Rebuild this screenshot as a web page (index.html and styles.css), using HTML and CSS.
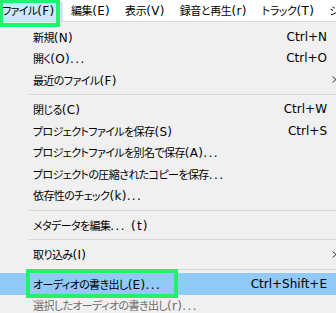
FILE: index.html
```html
<!DOCTYPE html>
<html lang="ja">
<head>
<meta charset="utf-8">
<link rel="stylesheet" href="styles.css">
</head>
<body>
<div class="menubar">
  <span class="mi first active">ファイル<span class="lat">(F)</span></span>
  <span class="mi">編集<span class="lat">(E)</span></span>
  <span class="mi">表示<span class="lat">(V)</span></span>
  <span class="mi">録音と再生<span class="lat">(r)</span></span>
  <span class="mi">トラック<span class="lat">(T)</span></span>
  <span class="mi">ジ</span>
</div>
<div class="menu">
  <div class="row"><span class="label">新規<span class="lat">(N)</span></span><span class="key">Ctrl+N</span><span class="sub"></span></div>
  <div class="row"><span class="label">開く<span class="lat">(O)</span><span class="dots">...</span></span><span class="key">Ctrl+O</span><span class="sub"></span></div>
  <div class="row"><span class="label">最近のファイル<span class="lat">(F)</span></span><span class="key"></span><span class="sub"><svg width="5" height="7" viewBox="0 0 5 7"><path d="M0.5 0.5 L4 3.5 L0.5 6.5" fill="none" stroke="#3c3c3c" stroke-width="1"/></svg></span></div>
  <div class="sep"></div>
  <div class="row"><span class="label">閉じる<span class="lat">(C)</span></span><span class="key">Ctrl+W</span><span class="sub"></span></div>
  <div class="row"><span class="label">プロジェクトファイルを保存<span class="lat">(S)</span></span><span class="key">Ctrl+S</span><span class="sub"></span></div>
  <div class="row"><span class="label">プロジェクトファイルを別名で保存<span class="lat">(A)</span><span class="dots">...</span></span><span class="key"></span><span class="sub"></span></div>
  <div class="row"><span class="label">プロジェクトの圧縮されたコピーを保存<span class="dots">...</span></span><span class="key"></span><span class="sub"></span></div>
  <div class="row"><span class="label">依存性のチェック<span class="lat">(k)</span><span class="dots">...</span></span><span class="key"></span><span class="sub"></span></div>
  <div class="sep"></div>
  <div class="row"><span class="label">メタデータを編集<span class="dots">...</span><span class="lat wide"> (t)</span></span><span class="key"></span><span class="sub"></span></div>
  <div class="sep"></div>
  <div class="row"><span class="label">取り込み<span class="lat">(I)</span></span><span class="key"></span><span class="sub"><svg width="5" height="7" viewBox="0 0 5 7"><path d="M0.5 0.5 L4 3.5 L0.5 6.5" fill="none" stroke="#3c3c3c" stroke-width="1"/></svg></span></div>
  <div class="sep"></div>
  <div class="row hl"><span class="label">オーディオの書き出し<span class="lat">(E)</span><span class="dots">...</span></span><span class="key">Ctrl+Shift+E</span><span class="sub"></span></div>
  <div class="row disabled"><span class="label">選択したオーディオの書き出し<span class="lat">(r)</span><span class="dots">...</span></span><span class="key"></span><span class="sub"></span></div>
</div>
<div class="mark mark-file"></div>
<div class="mark mark-export"></div>
</body>
</html>
```
FILE: styles.css
```css
html, body {
  margin: 0;
  padding: 0;
}
body {
  width: 336px;
  height: 313px;
  overflow: hidden;
  position: relative;
  background: #f0f0f0;
  color: #000;
  font-family: "DejaVu Sans", "Noto Sans CJK JP", sans-serif;
  font-size: 11px;
  font-feature-settings: "palt" 1;
}
.menubar {
  height: 21px;
  background: #fff;
  border-bottom: 1px solid #d9d9d9;
  display: flex;
  align-items: flex-start;
  white-space: nowrap;
  overflow: hidden;
  letter-spacing: -0.4px;
}
.mi {
  display: block;
  height: 19px;
  line-height: 19px;
  margin-top: 2px;
  padding: 0 7.5px;
}
.mi.first {
  padding-left: 3px;
  padding-right: 9px;
  margin-left: -1px;
  letter-spacing: -0.7px;
}
.mi.active {
  background: #cce8ff;
}
.lat {
  font-size: 12px;
  letter-spacing: 0.3px;
}
.lat.wide {
  letter-spacing: 1.2px;
}
.dots {
  font-size: 12px;
  letter-spacing: 1.4px;
}
.menu {
  width: 340px;
  padding-top: 4px;
}
.row {
  display: flex;
  align-items: center;
  height: 21.5px;
  padding-left: 33px;
  white-space: nowrap;
}
.label {
  flex: 1;
  letter-spacing: -0.6px;
}
.key {
  margin-left: auto;
  font-size: 12px;
}
.sub {
  width: 13px;
  flex: none;
  display: flex;
  align-items: center;
}
.sub svg {
  margin-left: 4.5px;
}
.sep {
  height: 8px;
  display: flex;
  align-items: center;
  padding-left: 29px;
}
.sep::after {
  content: "";
  display: block;
  flex: 1;
  height: 1px;
  background: #d7d7d7;
}
.hl {
  background: #91c9f7;
}
.disabled {
  color: #6d6d6d;
}
.mark {
  position: absolute;
  border: 4px solid #1ff26c;
  box-sizing: border-box;
}
.mark-file {
  left: -1px;
  top: -1px;
  width: 61px;
  height: 28px;
}
.mark-export {
  left: 26px;
  top: 269px;
  width: 152px;
  height: 29px;
}
```
